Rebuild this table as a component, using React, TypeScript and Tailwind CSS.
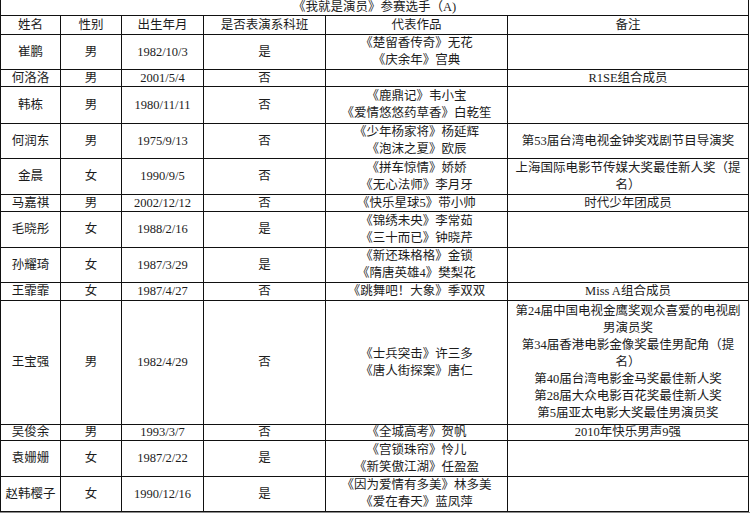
type Contestant = {
  name: string;
  gender: string;
  birth: string;
  drama: string;
  works: string[];
  notes: string[];
  h: string;
};

// row heights are fixed to the line positions in the sheet
const ROWS: Contestant[] = [
  { name: '崔鹏', gender: '男', birth: '1982/10/3', drama: '是', works: ['《楚留香传奇》无花', '《庆余年》宫典'], notes: [], h: 'h-[35px]' },
  { name: '何洛洛', gender: '男', birth: '2001/5/4', drama: '否', works: [], notes: ['R1SE组合成员'], h: 'h-[17px]' },
  { name: '韩栋', gender: '男', birth: '1980/11/11', drama: '否', works: ['《鹿鼎记》韦小宝', '《爱情悠悠药草香》白乾笙'], notes: [], h: 'h-[37px]' },
  { name: '何润东', gender: '男', birth: '1975/9/13', drama: '否', works: ['《少年杨家将》杨延辉', '《泡沫之夏》欧辰'], notes: ['第53届台湾电视金钟奖戏剧节目导演奖'], h: 'h-[35px]' },
  { name: '金晨', gender: '女', birth: '1990/9/5', drama: '否', works: ['《拼车惊情》娇娇', '《无心法师》李月牙'], notes: ['上海国际电影节传媒大奖最佳新人奖（提', '名）'], h: 'h-[36px]' },
  { name: '马嘉祺', gender: '男', birth: '2002/12/12', drama: '否', works: ['《快乐星球5》带小帅'], notes: ['时代少年团成员'], h: 'h-[17px]' },
  { name: '毛晓彤', gender: '女', birth: '1988/2/16', drama: '是', works: ['《锦绣未央》李常茹', '《三十而已》钟晓芹'], notes: [], h: 'h-[36px]' },
  { name: '孙耀琦', gender: '女', birth: '1987/3/29', drama: '是', works: ['《新还珠格格》金锁', '《隋唐英雄4》樊梨花'], notes: [], h: 'h-[35px]' },
  { name: '王霏霏', gender: '女', birth: '1987/4/27', drama: '否', works: ['《跳舞吧！大象》季双双'], notes: ['Miss A组合成员'], h: 'h-[18px]' },
  {
    name: '王宝强', gender: '男', birth: '1982/4/29', drama: '否',
    works: ['《士兵突击》许三多', '《唐人街探案》唐仁'],
    notes: [
      '第24届中国电视金鹰奖观众喜爱的电视剧',
      '男演员奖',
      '第34届香港电影金像奖最佳男配角（提',
      '名）',
      '第40届台湾电影金马奖最佳新人奖',
      '第28届大众电影百花奖最佳新人奖',
      '第5届亚太电影大奖最佳男演员奖',
    ],
    h: 'h-[124px]',
  },
  { name: '吴俊余', gender: '男', birth: '1993/3/7', drama: '否', works: ['《全城高考》贺帆'], notes: ['2010年快乐男声9强'], h: 'h-[16px]' },
  { name: '袁姗姗', gender: '女', birth: '1987/2/22', drama: '是', works: ['《宫锁珠帘》怜儿', '《新笑傲江湖》任盈盈'], notes: [], h: 'h-[36px]' },
  { name: '赵韩樱子', gender: '女', birth: '1990/12/16', drama: '是', works: ['《因为爱情有多美》林多美', '《爱在春天》蓝凤萍'], notes: [], h: 'h-[35px]' },
];

const HEADERS = ['姓名', '性别', '出生年月', '是否表演系科班', '代表作品', '备注'];

const cell = 'flex flex-col items-center justify-center text-center border-r border-b border-[#111] overflow-hidden whitespace-nowrap';

function Lines({ lines }: { lines: string[] }) {
  return (
    <>
      {lines.map((l, i) => (
        <div key={i} className="leading-[17px]">{l}</div>
      ))}
    </>
  );
}

export default function App() {
  return (
    <div
      className="w-[750px] h-[513px] bg-white text-[#1c1c1c] text-[12.5px] overflow-hidden"
      style={{ fontFamily: '"Liberation Serif", "Noto Sans CJK SC", serif' }}
    >
      <div className="w-[749px] border-l border-[#111] grid grid-cols-[60px_61px_82px_122px_182px_241px]">
        {/* title */}
        <div className={`${cell} col-span-6 h-[16px] leading-[15px]`}>《我就是演员》参赛选手（A)</div>

        {HEADERS.map(h => (
          <div key={h} className={`${cell} h-[19px]`}>{h}</div>
        ))}

        {ROWS.map(r => (
          <div key={r.name} className="contents">
            <div className={`${cell} ${r.h}`}>{r.name}</div>
            <div className={`${cell} ${r.h}`}>{r.gender}</div>
            <div className={`${cell} ${r.h}`}>{r.birth}</div>
            <div className={`${cell} ${r.h}`}>{r.drama}</div>
            <div className={`${cell} ${r.h}`}><Lines lines={r.works} /></div>
            <div className={`${cell} ${r.h}`}><Lines lines={r.notes} /></div>
          </div>
        ))}
      </div>
      <div className="h-[2px] w-[750px] bg-[#8c8c8c]" />
    </div>
  );
}
